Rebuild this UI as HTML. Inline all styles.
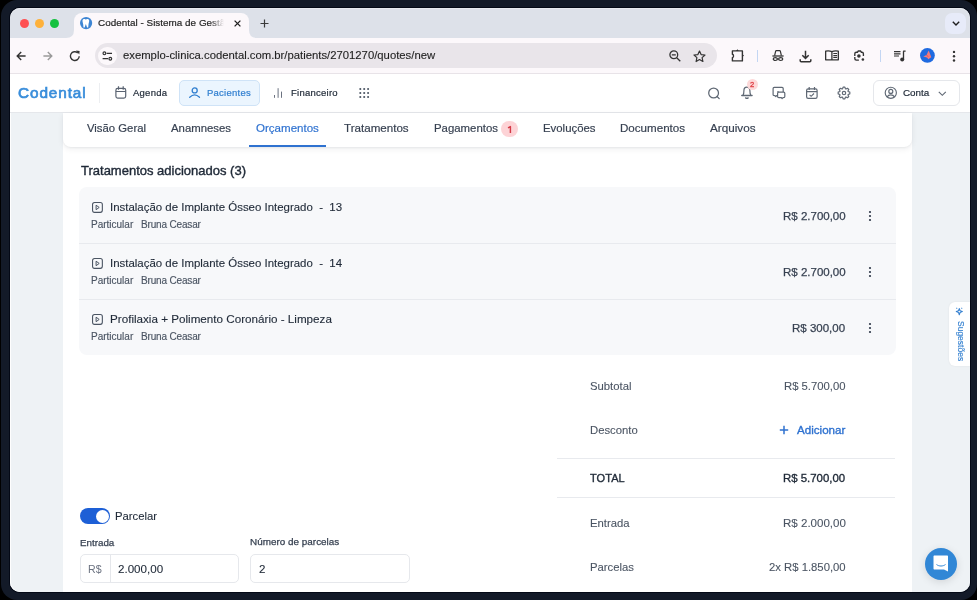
<!DOCTYPE html>
<html><head><meta charset="utf-8">
<style>
*{margin:0;padding:0;box-sizing:border-box}
html,body{width:977px;height:600px;overflow:hidden;background:#000;font-family:"Liberation Sans",sans-serif;position:relative}
.abs{position:absolute}
.t{position:absolute;white-space:nowrap;line-height:1;will-change:transform}
svg{overflow:visible}
</style></head><body>
<div class="abs" style="left:1px;top:0px;width:976px;height:600px;background:#131a28;border-radius:16px;"></div>
<div class="abs" style="left:10px;top:8px;width:960px;height:584px;background:#eef2f5;border-radius:10px;box-shadow:0 0 0 1px #040916;"></div>
<div class="abs" style="left:10px;top:8px;width:960px;height:30px;background:#dde1e9;border-radius:10px 10px 0 0;box-shadow:inset 0 1px 0 rgba(255,255,255,0.3);"></div>
<div class="abs" style="left:19.80px;top:18.90px;width:9.4px;height:9.4px;border-radius:50%;background:#fe5052"></div>
<div class="abs" style="left:34.80px;top:18.90px;width:9.4px;height:9.4px;border-radius:50%;background:#feb13a"></div>
<div class="abs" style="left:49.90px;top:18.90px;width:9.4px;height:9.4px;border-radius:50%;background:#15c13f"></div>
<div class="abs" style="left:74px;top:13px;width:175px;height:25px;background:#fcf8fb;border-radius:8px 8px 0 0;"></div>
<svg class="abs" style="left:66px;top:30px;" width="8" height="8" viewBox="0 0 8 8"><path d="M0 8 Q8 8 8 0 L8 8 Z" fill="#fcf8fb"/></svg>
<svg class="abs" style="left:249px;top:30px;" width="8" height="8" viewBox="0 0 8 8"><path d="M8 8 Q0 8 0 0 L0 8 Z" fill="#fcf8fb"/></svg>
<svg class="abs" style="left:79.7px;top:17.05px;" width="12.2" height="12.2" viewBox="0 0 12.2 12.2"><circle cx="6.1" cy="6.1" r="6.1" fill="#3d85d3"/><path d="M2.5 3.6 C2.5 2.4 3.4 1.9 4.3 1.9 C5.1 1.9 5.5 2.4 5.85 2.4 C6.2 2.4 6.6 1.9 7.4 1.9 C8.3 1.9 9.2 2.4 9.2 3.6 C9.2 5.3 8.7 6.1 8.5 7.6 L8.2 10.6 L7.1 10.6 L5.85 7 L4.6 10.6 L3.5 10.6 L3.2 7.6 C3 6.1 2.5 5.3 2.5 3.6 Z" fill="#fff"/></svg>
<div class="t" style="top:18.42px;font-size:9.9px;color:#262626;letter-spacing:0.02px;left:98.10px;width:126px;overflow:hidden;-webkit-text-stroke:0.2px #262626;-webkit-mask-image:linear-gradient(90deg,#000 89%,transparent 100%);">Codental - Sistema de Gestão</div>
<svg class="abs" style="left:233.5px;top:20px;" width="7" height="7" viewBox="0 0 7 7"><path d="M0.6 0.6 L6.4 6.4 M6.4 0.6 L0.6 6.4" stroke="#1f1f1f" stroke-width="1.3"/></svg>
<svg class="abs" style="left:259.5px;top:19px;" width="9" height="9" viewBox="0 0 9 9"><path d="M4.5 0.5 V8.5 M0.5 4.5 H8.5" stroke="#3a3a3a" stroke-width="1.2"/></svg>
<div class="abs" style="left:945px;top:13px;width:21px;height:21px;background:#e7ebf9;border-radius:7px;"></div>
<svg class="abs" style="left:951.5px;top:20.5px;" width="8" height="5" viewBox="0 0 8 5"><path d="M0.8 0.8 L4 4 L7.2 0.8" stroke="#1f1f1f" stroke-width="1.4" fill="none"/></svg>
<div class="abs" style="left:10px;top:38px;width:960px;height:36px;background:#fcf8fb;border-bottom:1px solid #e8e3e8;"></div>
<svg class="abs" style="left:16px;top:51px;" width="10" height="10" viewBox="0 0 10 10"><path d="M9.6 5 H1.2 M5.2 1 L1.2 5 L5.2 9" stroke="#333" stroke-width="1.4" fill="none"/></svg>
<svg class="abs" style="left:43px;top:51px;" width="10" height="10" viewBox="0 0 10 10"><path d="M0.4 5 H8.8 M4.8 1 L8.8 5 L4.8 9" stroke="#9a9a9a" stroke-width="1.4" fill="none"/></svg>
<svg class="abs" style="left:69px;top:50px;" width="12" height="12" viewBox="0 0 12 12"><path d="M10.2 6.2 A4.4 4.4 0 1 1 8.8 2.9" stroke="#333" stroke-width="1.4" fill="none"/><path d="M7 0.6 L10.6 0.9 L10.3 4.5 Z" fill="#333"/></svg>
<div class="abs" style="left:95px;top:43px;width:622px;height:25px;background:#e9e5ea;border-radius:12.5px;"></div>
<div class="abs" style="left:98px;top:46.5px;width:18.5px;height:18.5px;background:#fcf8fb;border-radius:50%;"></div>
<svg class="abs" style="left:102px;top:51px;" width="11" height="10" viewBox="0 0 11 10"><circle cx="2.4" cy="2.3" r="1.4" stroke="#333" stroke-width="1.15" fill="none"/><path d="M4.6 2.3 H10 M0.6 7.7 H6" stroke="#333" stroke-width="1.2"/><circle cx="8.3" cy="7.7" r="1.4" stroke="#333" stroke-width="1.15" fill="none"/></svg>
<div class="t" style="top:49.93px;font-size:11.3px;color:#1f1f1f;left:122.80px;-webkit-text-stroke:0.12px #1f1f1f;">exemplo-clinica.codental.com.br/patients/2701270/quotes/new</div>
<svg class="abs" style="left:669px;top:50px;" width="12" height="12" viewBox="0 0 12 12"><circle cx="4.8" cy="4.8" r="3.9" stroke="#333" stroke-width="1.3" fill="none"/><path d="M2.8 4.8 H6.8 M7.7 7.7 L11.3 11.3" stroke="#333" stroke-width="1.3"/></svg>
<svg class="abs" style="left:692.5px;top:49.5px;" width="13" height="13" viewBox="0 0 13 13"><path d="M6.5 1 L8.1 4.6 L12 5 L9.1 7.6 L9.9 11.5 L6.5 9.5 L3.1 11.5 L3.9 7.6 L1 5 L4.9 4.6 Z" stroke="#333" stroke-width="1.2" fill="none" stroke-linejoin="round"/></svg>
<svg class="abs" style="left:730.5px;top:49px;" width="14" height="13" viewBox="0 0 14 13"><path d="M1.4 1.9 H11.4 V11.9 H1.4 V8.6 C2.9 8.3 2.9 5.6 1.4 5.3 Z" stroke="#333" stroke-width="1.4" fill="none" stroke-linejoin="round"/><path d="M5 1.9 L6.4 0.3 L7.8 1.9 Z M11.4 5.2 L13 6.6 L11.4 8 Z" fill="#333"/></svg>
<div class="abs" style="left:756.5px;top:50px;width:1.0px;height:12px;background:#c3d6f3;"></div>
<svg class="abs" style="left:771.5px;top:50px;" width="12" height="11" viewBox="0 0 12 11"><path d="M0.4 6 H11.6" stroke="#333" stroke-width="1.3"/><path d="M2.6 5.6 L3.6 1.3 C3.7 0.9 4 0.7 4.4 0.7 H7.6 C8 0.7 8.3 0.9 8.4 1.3 L9.4 5.6" stroke="#333" stroke-width="1.2" fill="none"/><ellipse cx="3.3" cy="9.1" rx="2.1" ry="1.4" stroke="#333" stroke-width="1.2" fill="none"/><ellipse cx="8.7" cy="9.1" rx="2.1" ry="1.4" stroke="#333" stroke-width="1.2" fill="none"/><path d="M5.4 9.1 H6.6" stroke="#333" stroke-width="1.2"/></svg>
<svg class="abs" style="left:798.5px;top:49.5px;" width="13" height="13" viewBox="0 0 13 13"><path d="M6.5 0.8 V8.3 M3.3 5.2 L6.5 8.4 L9.7 5.2" stroke="#333" stroke-width="1.5" fill="none"/><path d="M1.2 9.3 V10.8 C1.2 11.4 1.6 11.8 2.2 11.8 H10.8 C11.4 11.8 11.8 11.4 11.8 10.8 V9.3" stroke="#333" stroke-width="1.5" fill="none"/></svg>
<svg class="abs" style="left:825px;top:50px;" width="14" height="11" viewBox="0 0 14 11"><path d="M0.65 1.2 C2.5 0.8 4.8 0.8 6.9 1.6 C9 0.8 11.3 0.8 13.35 1.2 V9.8 H0.65 Z M6.9 1.6 V9.8" stroke="#333" stroke-width="1.3" fill="none" stroke-linejoin="round"/><path d="M8.3 3.5 H12.1 M8.3 5.5 H12.1 M8.3 7.4 H12.1" stroke="#333" stroke-width="1.1"/></svg>
<svg class="abs" style="left:852px;top:48px;" width="16" height="16" viewBox="0 0 16 16"><path d="M2.8 7.9 V5.7 Q2.8 4.2 4.3 4.2 H5.4 L6.3 3 H8.5 L9.4 4.2 H9.9 Q11.4 4.2 11.4 5.7 V7.9 M2.8 9.1 V10.6 Q2.8 12.1 4.3 12.1 H6.9" stroke="#333" stroke-width="1.35" fill="none"/><circle cx="6.9" cy="8" r="1.8" fill="#333"/><circle cx="10.9" cy="11.5" r="1.3" fill="#333"/></svg>
<div class="abs" style="left:879.5px;top:50px;width:1.0px;height:12px;background:#c3d6f3;"></div>
<svg class="abs" style="left:893px;top:50px;" width="14" height="12" viewBox="0 0 14 12"><path d="M1 1.6 H7.5 M1 3.8 H7.5 M1 6 H6" stroke="#333" stroke-width="1.2"/><path d="M10.5 1.2 V9.5 M10.2 1.2 H12.6" stroke="#333" stroke-width="1.3"/><circle cx="9.2" cy="9.4" r="2" fill="#333"/></svg>
<svg class="abs" style="left:919.8px;top:48.1px;" width="14.8" height="14.8" viewBox="0 0 14.8 14.8"><circle cx="7.4" cy="7.4" r="7.4" fill="#1f6ae0"/><path d="M8.7 2.4 C9.6 4.6 10.6 7 11.3 9.3 L9.7 10.3 L8.3 11.3 L7.3 9.7 C6 9.3 4.5 8.9 3.2 8.5 C4.3 7.9 5.6 7.4 6.6 7 C7.2 5.4 7.9 3.8 8.7 2.4 Z" fill="#f47a7a"/><path d="M6.6 7 L8.2 8.8" stroke="#d94a4a" stroke-width="0.8"/></svg>
<svg class="abs" style="left:952.3px;top:49.5px;" width="4" height="13" viewBox="0 0 4 13"><circle cx="2" cy="1.9" r="1.2" fill="#333"/><circle cx="2" cy="6.2" r="1.2" fill="#333"/><circle cx="2" cy="10.5" r="1.2" fill="#333"/></svg>
<div class="abs" style="left:10px;top:74px;width:960px;height:39px;background:#ffffff;border-bottom:1px solid #e5e7eb;"></div>
<div class="t" style="top:85.45px;font-size:15.3px;color:#3a8edb;letter-spacing:0.92px;left:17.50px;-webkit-text-stroke:0.7px #3a8edb;">Codental</div>
<div class="abs" style="left:99px;top:83px;width:1px;height:20px;background:#eceef1;"></div>
<svg class="abs" style="left:114px;top:85px;" width="14" height="15" viewBox="0 0 14 15"><rect x="1.9" y="3.4" width="9.8" height="9.7" rx="1.8" stroke="#5b6472" stroke-width="1.2" fill="none"/><path d="M1.9 6.5 H11.7 M4.5 1.3 V4.8 M9.2 1.3 V4.8" stroke="#5b6472" stroke-width="1.2"/></svg>
<div class="t" style="top:88.26px;font-size:9.5px;color:#1f2937;letter-spacing:0.25px;left:133.20px;-webkit-text-stroke:0.2px #1f2937;">Agenda</div>
<div class="abs" style="left:179px;top:80px;width:81px;height:25.5px;background:#ebf5fe;border:1px solid #cfe3f7;border-radius:5px;"></div>
<svg class="abs" style="left:188px;top:86px;" width="14" height="13" viewBox="0 0 14 13"><circle cx="6.7" cy="4.4" r="2.5" stroke="#2f7ecf" stroke-width="1.3" fill="none"/><path d="M1.7 11.2 Q6.6 6.6 11.5 11.2" stroke="#2f7ecf" stroke-width="1.3" fill="none" stroke-linecap="round"/></svg>
<div class="t" style="top:88.26px;font-size:9.5px;color:#2f7ecf;letter-spacing:0.25px;left:207.00px;-webkit-text-stroke:0.2px #2f7ecf;">Pacientes</div>
<svg class="abs" style="left:273px;top:87px;" width="10" height="12" viewBox="0 0 10 12"><path d="M1.5 10.8 V8 M5.1 10.8 V1.2 M8.5 10.8 V4.6" stroke="#6b7280" stroke-width="1"/></svg>
<div class="t" style="top:88.26px;font-size:9.5px;color:#1f2937;letter-spacing:0.25px;left:290.80px;-webkit-text-stroke:0.2px #1f2937;">Financeiro</div>
<svg class="abs" style="left:359px;top:87px;" width="12" height="12" viewBox="0 0 12 12"><circle cx="1.3" cy="2" r="1.05" fill="#4b5563"/><circle cx="1.3" cy="6" r="1.05" fill="#4b5563"/><circle cx="1.3" cy="10" r="1.05" fill="#4b5563"/><circle cx="5.2" cy="2" r="1.05" fill="#4b5563"/><circle cx="5.2" cy="6" r="1.05" fill="#4b5563"/><circle cx="5.2" cy="10" r="1.05" fill="#4b5563"/><circle cx="9.1" cy="2" r="1.05" fill="#4b5563"/><circle cx="9.1" cy="6" r="1.05" fill="#4b5563"/><circle cx="9.1" cy="10" r="1.05" fill="#4b5563"/></svg>
<svg class="abs" style="left:707px;top:87px;" width="14" height="14" viewBox="0 0 14 14"><circle cx="6.6" cy="6" r="4.9" stroke="#5f6874" stroke-width="1.25" fill="none"/><path d="M10.1 9.5 L12.2 11.6" stroke="#5f6874" stroke-width="1.25" stroke-linecap="round"/></svg>
<svg class="abs" style="left:740px;top:85px;" width="14" height="15" viewBox="0 0 14 15"><path d="M3 10.3 C3.6 9.3 3.9 7.6 3.9 5.7 C3.9 3.4 5.2 2.1 6.9 2.1 C8.6 2.1 9.9 3.4 9.9 5.7 C9.9 7.6 10.2 9.3 10.8 10.3" stroke="#5f6874" stroke-width="1.2" fill="none"/><path d="M1.8 10.4 H12" stroke="#5f6874" stroke-width="1.5" stroke-linecap="round"/><path d="M5.6 12.9 Q6.9 13.8 8.2 12.9" stroke="#5f6874" stroke-width="1.3" fill="none" stroke-linecap="round"/></svg>
<div class="abs" style="left:746.5px;top:78.8px;width:11.200000000000045px;height:11.200000000000003px;background:#fdd9d9;border-radius:50%;"></div>
<div class="t" style="top:80.57px;font-size:7.6px;color:#e0454b;left:752.10px;transform:translateX(-50%);-webkit-text-stroke:0.35px #e0454b;">2</div>
<svg class="abs" style="left:772px;top:86px;" width="14" height="14" viewBox="0 0 14 14"><path d="M6 6.2 V5 M5.4 9.6 H4.6 L3.8 10.6 L3 9.6 H2.3 Q1.1 9.6 1.1 8.4 V2.5 Q1.1 1.3 2.3 1.3 H10 Q11.2 1.3 11.2 2.5 V6" stroke="#5f6874" stroke-width="1.2" fill="none" stroke-linejoin="round"/><path d="M6.8 6.1 H11.6 Q12.8 6.1 12.8 7.3 V10.5 Q12.8 11.7 11.6 11.7 H11 L10.1 12.6 L9.4 11.7 H6.8 Q5.6 11.7 5.6 10.5 V7.3 Q5.6 6.1 6.8 6.1 Z" stroke="#5f6874" stroke-width="1.2" fill="#fff" stroke-linejoin="round"/></svg>
<svg class="abs" style="left:805px;top:86px;" width="14" height="14" viewBox="0 0 14 14"><rect x="1.6" y="2.9" width="10.5" height="9.5" rx="1.6" stroke="#5f6874" stroke-width="1.2" fill="none"/><path d="M1.6 5.6 H12.1 M4.2 1 V4 M9.5 1 V4" stroke="#5f6874" stroke-width="1.2"/><path d="M4.6 8.9 L6.1 10.3 L9 7.5" stroke="#5f6874" stroke-width="1.1" fill="none"/></svg>
<svg class="abs" style="left:837.4px;top:86px;" width="14" height="14" viewBox="0 0 14 14"><path d="M5.57 2.84 L6.08 1.17 L7.92 1.17 L8.43 2.84 L8.93 3.05 L10.47 2.23 L11.77 3.53 L10.95 5.07 L11.16 5.57 L12.83 6.08 L12.83 7.92 L11.16 8.43 L10.95 8.93 L11.77 10.47 L10.47 11.77 L8.93 10.95 L8.43 11.16 L7.92 12.83 L6.08 12.83 L5.57 11.16 L5.07 10.95 L3.53 11.77 L2.23 10.47 L3.05 8.93 L2.84 8.43 L1.17 7.92 L1.17 6.08 L2.84 5.57 L3.05 5.07 L2.23 3.53 L3.53 2.23 L5.07 3.05 Z" stroke="#5f6874" stroke-width="1.15" fill="none" stroke-linejoin="round"/><circle cx="7" cy="7" r="1.7" stroke="#5f6874" stroke-width="1.15" fill="none"/></svg>
<div class="abs" style="left:873.2px;top:80px;width:86.79999999999995px;height:25.5px;background:#fff;border:1px solid #e5e7eb;border-radius:6px;"></div>
<svg class="abs" style="left:884px;top:86.2px;" width="14" height="14" viewBox="0 0 14 14"><circle cx="6.8" cy="6.8" r="5.6" stroke="#5f6874" stroke-width="1.15" fill="none"/><circle cx="6.8" cy="5.4" r="2" stroke="#5f6874" stroke-width="1.15" fill="none"/><path d="M3.1 10.9 C4 9.4 5.2 8.8 6.8 8.8 C8.4 8.8 9.6 9.4 10.5 10.9" stroke="#5f6874" stroke-width="1.15" fill="none"/></svg>
<div class="t" style="top:87.96px;font-size:9.85px;color:#1f2937;left:903.20px;-webkit-text-stroke:0.2px #1f2937;">Conta</div>
<svg class="abs" style="left:937.5px;top:90.5px;" width="9" height="6" viewBox="0 0 9 6"><path d="M0.8 0.8 L4.3 4.3 L7.8 0.8" stroke="#5f6874" stroke-width="1.15" fill="none"/></svg>
<div class="abs" style="left:10px;top:113px;width:960px;height:479px;background:#eef2f5;border-radius:0 0 10px 10px;box-shadow:inset 1px 0 0 rgba(255,255,255,0.9);"></div>
<div class="abs" style="left:63px;top:113px;width:849px;height:479px;background:#ffffff;"></div>
<div class="abs" style="left:63px;top:113px;width:849px;height:33.80000000000001px;background:#ffffff;border-radius:0 0 8px 8px;box-shadow:0 2px 6px rgba(17,24,39,0.07),0 1px 2px rgba(17,24,39,0.05);"></div>
<div class="t" style="top:122.71px;font-size:11.33px;color:#374151;left:86.60px;-webkit-text-stroke:0.18px #374151;">Visão Geral</div>
<div class="t" style="top:122.68px;font-size:11.36px;color:#374151;left:171.00px;-webkit-text-stroke:0.18px #374151;">Anamneses</div>
<div class="t" style="top:122.52px;font-size:11.55px;color:#2f72d0;left:256.00px;-webkit-text-stroke:0.18px #2f72d0;">Orçamentos</div>
<div class="t" style="top:122.48px;font-size:11.6px;color:#374151;left:344.00px;-webkit-text-stroke:0.18px #374151;">Tratamentos</div>
<div class="t" style="top:122.65px;font-size:11.4px;color:#374151;left:434.00px;-webkit-text-stroke:0.18px #374151;">Pagamentos</div>
<div class="t" style="top:122.67px;font-size:11.38px;color:#374151;left:542.50px;-webkit-text-stroke:0.18px #374151;">Evoluções</div>
<div class="t" style="top:122.48px;font-size:11.6px;color:#374151;left:620.00px;-webkit-text-stroke:0.18px #374151;">Documentos</div>
<div class="t" style="top:122.40px;font-size:11.7px;color:#374151;left:710.00px;-webkit-text-stroke:0.18px #374151;">Arquivos</div>
<div class="abs" style="left:249px;top:145px;width:77px;height:2px;background:#2f72d0;"></div>
<div class="abs" style="left:501.1px;top:120.9px;width:16.600000000000023px;height:16.599999999999994px;background:#fdd3d6;border-radius:50%;"></div>
<svg class="abs" style="left:505px;top:124.9px;" width="8" height="9" viewBox="0 0 8 9"><path d="M3 2.9 L5.4 1.6 V7.9" stroke="#d43a47" stroke-width="1.45" fill="none" stroke-linejoin="round"/></svg>
<div class="t" style="top:163.50px;font-size:13px;color:#1f2937;left:80.70px;-webkit-text-stroke:0.4px #1f2937;">Tratamentos adicionados (3)</div>
<div class="abs" style="left:79px;top:187px;width:817px;height:168px;background:#f7f8fa;border-radius:8px;"></div>
<div class="abs" style="left:79px;top:243px;width:817px;height:1px;background:#e8eaee;"></div>
<div class="abs" style="left:79px;top:299px;width:817px;height:1px;background:#e8eaee;"></div>
<svg class="abs" style="left:92px;top:201.8px;" width="11" height="11" viewBox="0 0 11 11"><rect x="0.55" y="0.55" width="9.8" height="9.8" rx="2" stroke="#4b5563" stroke-width="1.1" fill="none"/><path d="M4.1 3.2 L7.2 5.45 L4.1 7.7 Z" stroke="#4b5563" stroke-width="1" fill="none" stroke-linejoin="round"/></svg>
<div class="t" style="top:201.51px;font-size:11.45px;color:#1f2937;left:110.00px;-webkit-text-stroke:0.12px #1f2937;">Instalação de Implante Ósseo Integrado&nbsp; - &nbsp;13</div>
<div class="t" style="top:219.84px;font-size:10px;color:#4b5563;left:91.20px;-webkit-text-stroke:0.15px #4b5563;">Particular</div>
<div class="t" style="top:219.84px;font-size:10px;color:#4b5563;letter-spacing:-0.16px;left:140.60px;-webkit-text-stroke:0.15px #4b5563;">Bruna Ceasar</div>
<div class="t" style="top:210.67px;font-size:11.5px;color:#374151;right:131.50px;-webkit-text-stroke:0.25px #374151;">R$ 2.700,00</div>
<svg class="abs" style="left:868.3px;top:210px;" width="4" height="12" viewBox="0 0 4 12"><circle cx="2" cy="2" r="1.1" fill="#2d3748"/><circle cx="2" cy="6" r="1.1" fill="#2d3748"/><circle cx="2" cy="10" r="1.1" fill="#2d3748"/></svg>
<svg class="abs" style="left:92px;top:257.8px;" width="11" height="11" viewBox="0 0 11 11"><rect x="0.55" y="0.55" width="9.8" height="9.8" rx="2" stroke="#4b5563" stroke-width="1.1" fill="none"/><path d="M4.1 3.2 L7.2 5.45 L4.1 7.7 Z" stroke="#4b5563" stroke-width="1" fill="none" stroke-linejoin="round"/></svg>
<div class="t" style="top:257.51px;font-size:11.45px;color:#1f2937;left:110.00px;-webkit-text-stroke:0.12px #1f2937;">Instalação de Implante Ósseo Integrado&nbsp; - &nbsp;14</div>
<div class="t" style="top:275.84px;font-size:10px;color:#4b5563;left:91.20px;-webkit-text-stroke:0.15px #4b5563;">Particular</div>
<div class="t" style="top:275.84px;font-size:10px;color:#4b5563;letter-spacing:-0.16px;left:140.60px;-webkit-text-stroke:0.15px #4b5563;">Bruna Ceasar</div>
<div class="t" style="top:266.67px;font-size:11.5px;color:#374151;right:131.50px;-webkit-text-stroke:0.25px #374151;">R$ 2.700,00</div>
<svg class="abs" style="left:868.3px;top:266px;" width="4" height="12" viewBox="0 0 4 12"><circle cx="2" cy="2" r="1.1" fill="#2d3748"/><circle cx="2" cy="6" r="1.1" fill="#2d3748"/><circle cx="2" cy="10" r="1.1" fill="#2d3748"/></svg>
<svg class="abs" style="left:92px;top:313.8px;" width="11" height="11" viewBox="0 0 11 11"><rect x="0.55" y="0.55" width="9.8" height="9.8" rx="2" stroke="#4b5563" stroke-width="1.1" fill="none"/><path d="M4.1 3.2 L7.2 5.45 L4.1 7.7 Z" stroke="#4b5563" stroke-width="1" fill="none" stroke-linejoin="round"/></svg>
<div class="t" style="top:313.33px;font-size:11.66px;color:#1f2937;left:110.00px;-webkit-text-stroke:0.12px #1f2937;">Profilaxia + Polimento Coronário - Limpeza</div>
<div class="t" style="top:331.84px;font-size:10px;color:#4b5563;left:91.20px;-webkit-text-stroke:0.15px #4b5563;">Particular</div>
<div class="t" style="top:331.84px;font-size:10px;color:#4b5563;letter-spacing:-0.16px;left:140.60px;-webkit-text-stroke:0.15px #4b5563;">Bruna Ceasar</div>
<div class="t" style="top:322.67px;font-size:11.5px;color:#374151;right:131.50px;-webkit-text-stroke:0.25px #374151;">R$ 300,00</div>
<svg class="abs" style="left:868.3px;top:322px;" width="4" height="12" viewBox="0 0 4 12"><circle cx="2" cy="2" r="1.1" fill="#2d3748"/><circle cx="2" cy="6" r="1.1" fill="#2d3748"/><circle cx="2" cy="10" r="1.1" fill="#2d3748"/></svg>
<div class="t" style="top:381.33px;font-size:11.3px;color:#4b5563;left:589.60px;-webkit-text-stroke:0.1px #4b5563;">Subtotal</div>
<div class="t" style="top:381.33px;font-size:11.3px;color:#4b5563;right:131.50px;-webkit-text-stroke:0.1px #4b5563;">R$ 5.700,00</div>
<div class="t" style="top:424.63px;font-size:11.3px;color:#4b5563;left:589.60px;-webkit-text-stroke:0.1px #4b5563;">Desconto</div>
<svg class="abs" style="left:778.5px;top:425px;" width="10" height="10" viewBox="0 0 10 10"><path d="M5 0.8 V9.2 M0.8 5 H9.2" stroke="#2f72d0" stroke-width="1.5"/></svg>
<div class="t" style="top:424.38px;font-size:11.6px;color:#2f72d0;right:131.50px;-webkit-text-stroke:0.35px #2f72d0;">Adicionar</div>
<div class="abs" style="left:557px;top:458px;width:338px;height:1px;background:#e8eaee;"></div>
<div class="t" style="top:473.19px;font-size:11.0px;color:#1f2937;letter-spacing:0.05px;left:589.60px;-webkit-text-stroke:0.35px #1f2937;">TOTAL</div>
<div class="t" style="top:472.85px;font-size:11.4px;color:#1f2937;right:131.50px;-webkit-text-stroke:0.35px #1f2937;">R$ 5.700,00</div>
<div class="abs" style="left:557px;top:497px;width:338px;height:1px;background:#e8eaee;"></div>
<div class="t" style="top:518.03px;font-size:11.3px;color:#4b5563;left:589.60px;-webkit-text-stroke:0.1px #4b5563;">Entrada</div>
<div class="t" style="top:517.82px;font-size:11.55px;color:#4b5563;right:131.50px;-webkit-text-stroke:0.1px #4b5563;">R$ 2.000,00</div>
<div class="t" style="top:561.63px;font-size:11.3px;color:#4b5563;left:589.60px;-webkit-text-stroke:0.1px #4b5563;">Parcelas</div>
<div class="t" style="top:561.63px;font-size:11.3px;color:#4b5563;right:131.50px;-webkit-text-stroke:0.1px #4b5563;">2x R$ 1.850,00</div>
<div class="abs" style="left:80px;top:508px;width:30px;height:16px;background:#1d5fd6;border-radius:8px;"></div>
<div class="abs" style="left:95.5px;top:509.5px;width:13.0px;height:13.0px;background:#fff;border-radius:50%;"></div>
<div class="t" style="top:510.63px;font-size:11.3px;color:#1f2937;left:115.30px;-webkit-text-stroke:0.1px #1f2937;">Parcelar</div>
<div class="t" style="top:537.50px;font-size:9.8px;color:#374151;left:79.60px;-webkit-text-stroke:0.25px #374151;">Entrada</div>
<div class="t" style="top:537.42px;font-size:9.9px;color:#374151;letter-spacing:0.02px;left:250.00px;-webkit-text-stroke:0.25px #374151;">Número de parcelas</div>
<div class="abs" style="left:79.5px;top:553.5px;width:159.0px;height:29.0px;background:#fff;border:1px solid #e6e8ec;border-radius:5px;"></div>
<div class="abs" style="left:110px;top:554.5px;width:1px;height:27.0px;background:#e5e7eb;"></div>
<div class="t" style="top:563.63px;font-size:10.6px;color:#6b7280;left:88.00px;">R$</div>
<div class="t" style="top:562.78px;font-size:11.6px;color:#1f2937;left:118.30px;-webkit-text-stroke:0.1px #1f2937;">2.000,00</div>
<div class="abs" style="left:250px;top:553.5px;width:159.5px;height:29.0px;background:#fff;border:1px solid #e6e8ec;border-radius:5px;"></div>
<div class="t" style="top:562.78px;font-size:11.6px;color:#1f2937;left:258.60px;-webkit-text-stroke:0.1px #1f2937;">2</div>
<div class="abs" style="left:949px;top:302px;width:21px;height:64px;background:#ffffff;border-radius:6px 0 0 6px;box-shadow:0 0 2px rgba(0,0,0,0.08);"></div>
<svg class="abs" style="left:953px;top:305px;" width="13" height="13" viewBox="0 0 13 13"><path d="M6.3 3.6 L7.1 5.8 L9.3 6.6 L7.1 7.4 L6.3 9.7 L5.5 7.4 L3.3 6.6 L5.5 5.8 Z" stroke="#3580d0" stroke-width="1.1" fill="none" stroke-linejoin="round"/><path d="M3.8 2.5 L4.5 3.3 L3.8 4.1 L3.1 3.3 Z M8.8 2.5 L9.5 3.3 L8.8 4.1 L8.1 3.3 Z" fill="#3580d0"/></svg>
<div class="t" style="left:965px;top:320.8px;font-size:8.5px;color:#3580d0;-webkit-text-stroke:0.15px #3580d0;transform-origin:0 0;transform:rotate(90deg);">Sugestões</div>
<div class="abs" style="left:925px;top:547.5px;width:32px;height:32.0px;background:#3187d6;border-radius:50%;box-shadow:0 2px 8px rgba(0,0,0,0.12);"></div>
<svg class="abs" style="left:933px;top:555px;" width="16" height="17" viewBox="0 0 16 17"><path d="M1.5 0.5 H14 C14.6 0.5 15 0.9 15 1.5 V16.5 L11 14.5 H1.5 C0.9 14.5 0.5 14.1 0.5 13.5 V1.5 C0.5 0.9 0.9 0.5 1.5 0.5 Z" fill="#fff"/><path d="M3.5 9.5 C6 11.5 10 11.5 12.5 9.5" stroke="#3187d6" stroke-width="1" fill="none"/></svg>
</body></html>
